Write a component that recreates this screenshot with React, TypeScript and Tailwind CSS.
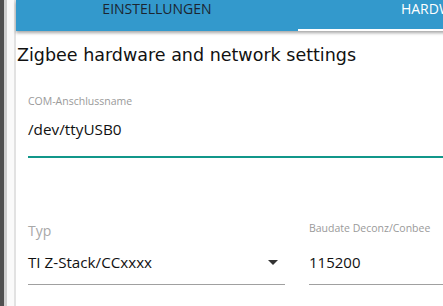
export default function App() {
  return (
    <div className="flex h-[306px] w-[443px] overflow-hidden bg-white">
      {/* left gutter */}
      <div className="flex shrink-0">
        <div className="w-[4px] bg-[#505050]" />
        <div className="w-[3px] bg-[#cfcfcf]" />
        <div className="w-[7px] bg-[#fafafa]" />
        <div className="w-[2px] bg-[#e2e2e2]" />
      </div>

      <div className="flex w-[600px] shrink-0 flex-col">
        <div className="relative flex h-[31px] bg-[#3399cc] shadow-[0_2px_3px_rgba(0,0,0,0.35)] font-['Open_Sans',sans-serif] text-[14px] leading-[18px]">
          <div className="flex w-[282px] justify-center text-[#1c2530]">EINSTELLUNGEN</div>
          <div className="relative flex w-[282px] justify-center text-white">
            HARDWARE
            <div className="absolute bottom-0 left-0 right-0 h-[2px] bg-white" />
          </div>
        </div>

        <div className="mt-[12px] pl-[1px] font-['DejaVu_Sans',sans-serif] text-[17.5px] leading-[24px] text-[#111]">
          Zigbee hardware and network settings
        </div>

        <div className="pl-[12px] font-['Open_Sans',sans-serif]">
          <div className="mt-[27px] text-[10.5px] leading-[14px] text-[#9a9a9a]">COM-Anschlussname</div>
          <div className="mt-[10px] border-b-2 border-[#11978a] pb-[16px] text-[15.3px] leading-[22px] text-[#111]">
            /dev/ttyUSB0
          </div>

          <div className="flex gap-[24px]">
            <div className="w-[257px]">
              <div className="mt-[64px] text-[14px] leading-[18px] text-[#a8a8a8]">Typ</div>
              <div className="mt-[11px] flex items-center justify-between border-b border-[#a0a0a0] pb-[11px] text-[15.2px] leading-[22px] text-[#111]">
                <span>TI Z-Stack/CCxxxx</span>
                <svg width="10" height="5" viewBox="0 0 10 5" className="mr-[7px]">
                  <path d="M0 0h10L5 5z" fill="#333" />
                </svg>
              </div>
            </div>
            <div className="flex-1">
              <div className="mt-[63px] text-[10.5px] leading-[14px] text-[#9a9a9a]">Baudate Deconz/Conbee</div>
              <div className="mt-[16px] border-b border-[#a0a0a0] pb-[11px] text-[15px] leading-[22px] text-[#111]">
                115200
              </div>
            </div>
          </div>
        </div>
      </div>
    </div>
  );
}
